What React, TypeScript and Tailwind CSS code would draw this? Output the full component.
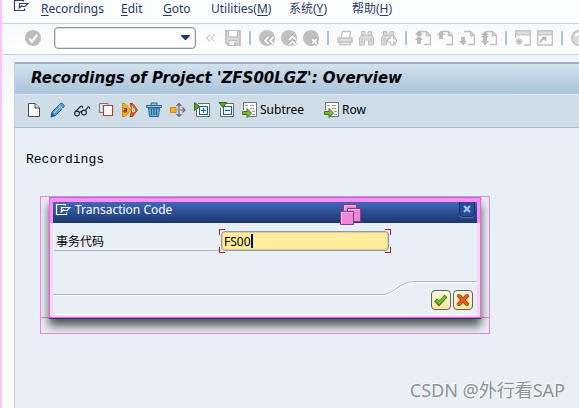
import type { ReactNode } from "react";

const GREY = "#c0c0c0";

function Icon({ children }: { children: ReactNode }) {
  return (
    <svg width="16" height="16" viewBox="0 0 16 16" fill="none" aria-hidden="true" className="block shrink-0">
      {children}
    </svg>
  );
}

function IconButton({ label, children }: { label: string; children: ReactNode }) {
  return (
    <button type="button" aria-label={label} title={label} className="h-4 w-4 shrink-0">
      <Icon>{children}</Icon>
    </button>
  );
}

function Separator() {
  return <span className="mx-2 h-3.5 w-0.5 shrink-0 bg-[#a9c4dd]" />;
}

function ExitMark({ color }: { color: string }) {
  return (
    <g stroke={color} strokeWidth="1.2">
      <path d="M10.5 3.5V2.5H1.5V12.5H11.5V10.5" />
      <path d="M6.5 9.5V5.5H15L12 8.5H8.5" />
      <path d="M5.5 10.5L9 7.5" />
    </g>
  );
}

function Page() {
  return <path d="M5 1.5H11.5L15.5 5.5V14.5H9M11.5 1.5V5.5H15.5" stroke={GREY} strokeWidth="1.5" />;
}

function Binoculars() {
  return (
    <>
      <path d="M2.5 1.5H6V5H9V1.5H12.5V5L14.5 8V15H9.5V10H5.5V15H0.5V8L2.5 5Z" fill="#dadada" stroke={GREY} />
      <path d="M2 5.5H6M9 5.5H13M3 8V13M12 8V13" stroke={GREY} />
    </>
  );
}

function TreeSheet() {
  return (
    <>
      <path d="M1.5 8V.5H14.5V14.5H6" fill="#fff" stroke="#707070" />
      <path d="M3 3.5H6M8 3.5H12M8 6.5H12M10 9.5H13M10 12.5H13" stroke="#9a9a9a" />
      <path d="M.5 9.5H5V6.5L9.5 11L5 15.5V12.5H.5Z" fill="#7dbb2c" stroke="#41761c" />
    </>
  );
}

function MenuBar() {
  const items = [
    { label: "Recordings", before: "", key: "R", after: "ecordings", width: "w-[80px]" },
    { label: "Edit", before: "", key: "E", after: "dit", width: "w-[42px]" },
    { label: "Goto", before: "", key: "G", after: "oto", width: "w-[48px]" },
    { label: "Utilities", before: "Utilities(", key: "M", after: ")", width: "w-[78px]" },
    { label: "系统", before: "系统(", key: "Y", after: ")", width: "w-[63px]" },
    { label: "帮助", before: "帮助(", key: "H", after: ")", width: "w-[50px]" },
  ];
  return (
    <nav className="flex h-6 items-start border-b border-[#cfd5de] bg-[#fcfdff] pl-[11px]">
      <button type="button" aria-label="System menu" className="-mt-0.5 mr-3">
        <Icon>
          <ExitMark color="#303d68" />
        </Icon>
      </button>
      {items.map((item) => (
        <button
          key={item.label}
          type="button"
          className={`${item.width} shrink-0 whitespace-nowrap text-left text-[12px] leading-[18px] text-[#283a66]`}
        >
          {item.before}
          <span className="underline underline-offset-2">{item.key}</span>
          {item.after}
        </button>
      ))}
    </nav>
  );
}

function StandardToolbar() {
  return (
    <div className="flex h-[31px] items-center overflow-hidden border-b border-[#c6cfda] bg-gradient-to-b from-[#f8f9fb] to-white pb-0.5 pl-[23px]">
      <IconButton label="Enter">
        <circle cx="8" cy="8" r="8" fill="#bdbdbd" />
        <path d="M4 8.5L7 11.5L12 5" stroke="#fff" strokeWidth="2.2" />
      </IconButton>
      <div className="relative ml-[13px] h-[22px] w-[142px] shrink-0">
        <select
          aria-label="Command"
          className="h-full w-full appearance-none rounded-sm border border-[#92979f] bg-white shadow-[inset_0_0_0_1px_#dcdfe3]"
        />
        <svg width="9" height="5" viewBox="0 0 9 5" aria-hidden="true" className="pointer-events-none absolute right-1.5 top-2">
          <path d="M0 0H9V1L5 5H4L0 1Z" fill="#26396b" />
        </svg>
      </div>
      <div className="ml-[7px] flex shrink-0 items-center gap-1.5">
        <IconButton label="Collapse">
          <path d="M7 4.5L3.5 8L7 11.5M11.5 4.5L8 8L11.5 11.5" stroke="#cfcfcf" strokeWidth="1.3" />
        </IconButton>
        <IconButton label="Save">
          <path d="M1 1H15V15H3L1 13Z" fill="#dcdcdc" stroke={GREY} strokeWidth="1.8" />
          <path d="M3.5 1V7H12.5V1M4 15V10.5H12V15" fill="#fff" stroke={GREY} strokeWidth="1.3" />
          <path d="M9 12H11V15H9Z" fill={GREY} />
        </IconButton>
      </div>
      <Separator />
      <div className="flex shrink-0 items-center gap-1.5">
        <IconButton label="Back">
          <circle cx="8" cy="8" r="8" fill={GREY} />
          <path d="M9.5 7L6 10.5L9.5 14M14.5 7L11 10.5L14.5 14" stroke="#aaa" strokeWidth="3.2" />
          <path d="M9.5 7L6 10.5L9.5 14M14.5 7L11 10.5L14.5 14" stroke="#fff" strokeWidth="1.8" />
        </IconButton>
        <IconButton label="Exit">
          <circle cx="8" cy="8" r="8" fill={GREY} />
          <path d="M8 10L11.5 6.5L15 10M8 15L11.5 11.5L15 15" stroke="#aaa" strokeWidth="3.2" />
          <path d="M8 10L11.5 6.5L15 10M8 15L11.5 11.5L15 15" stroke="#fff" strokeWidth="1.8" />
        </IconButton>
        <IconButton label="Cancel">
          <circle cx="8" cy="8" r="8" fill={GREY} />
          <path d="M8.5 8.5L14.5 14.5M14.5 8.5L8.5 14.5" stroke="#aaa" strokeWidth="4" />
          <path d="M9 9L14 14M14 9L9 14" stroke="#fff" strokeWidth="2.2" />
        </IconButton>
      </div>
      <Separator />
      <div className="flex shrink-0 items-center gap-1.5">
        <IconButton label="Print">
          <path d="M4 8L5.5 1.5H13.5L12.5 8" fill="#fff" stroke={GREY} strokeWidth="1.3" />
          <path d="M1 8H15V12H1Z" fill="#ddd" stroke={GREY} strokeWidth="1.5" />
          <path d="M3 12V14.5H13V12" stroke={GREY} strokeWidth="1.5" />
        </IconButton>
        <IconButton label="Find">
          <Binoculars />
        </IconButton>
        <IconButton label="Find next">
          <Binoculars />
          <path d="M9.5 6H12.5V9H15.5V12H12.5V15H9.5V12H6.5V9H9.5Z" fill="#fff" stroke={GREY} />
        </IconButton>
      </div>
      <Separator />
      <div className="flex shrink-0 items-center gap-1.5">
        <IconButton label="First page">
          <Page />
          <path d="M0 4.5L4 0L8 4.5H6V6H2V4.5ZM0 10L4 5.5L8 10H6V14H2V10Z" fill="#bbb" />
        </IconButton>
        <IconButton label="Previous page">
          <Page />
          <path d="M0 5L4 .5L8 5H6V9H2V5Z" fill="#bbb" />
        </IconButton>
        <IconButton label="Next page">
          <Page />
          <path d="M2 7H6V11H8L4 15.5L0 11H2Z" fill="#bbb" />
        </IconButton>
        <IconButton label="Last page">
          <Page />
          <path d="M0 5L4 1L8 5H6V6H8L4 10L0 6H2V5ZM2 8H6V11H8L4 15.5L0 11H2Z" fill="#bbb" />
        </IconButton>
      </div>
      <Separator />
      <div className="flex shrink-0 items-center gap-1.5">
        <IconButton label="New session">
          <path d="M.7 8V1H15.3V15H9" stroke={GREY} strokeWidth="1.3" />
          <path d="M1 1H15V5H1Z" fill="#dcdcdc" stroke={GREY} />
          <path d="M4 8V15M.5 11.5H7.5M1.5 9L6.5 14M6.5 9L1.5 14" stroke={GREY} strokeWidth="1.3" />
        </IconButton>
        <IconButton label="Create shortcut">
          <path d="M.7 1H15.3V15H.7Z" stroke={GREY} strokeWidth="1.3" />
          <path d="M1 1H15V5H1Z" fill="#dcdcdc" stroke={GREY} />
          <path d="M3.5 13C3.5 10 5 9 8 8.5M5 7.5H8.5V11" stroke="#b3b3b3" strokeWidth="1.5" />
        </IconButton>
      </div>
      <Separator />
      <IconButton label="Help">
        <circle cx="8" cy="8" r="7.3" fill="#d8d8d8" stroke={GREY} strokeWidth="1.4" />
        <path d="M5 6.5C5 2.5 11 3 11 6C11 8 8 8 8 10.5M8 12V13.5" stroke="#fff" strokeWidth="2" />
      </IconButton>
    </div>
  );
}

function ApplicationToolbar() {
  return (
    <div className="flex h-[33px] items-center gap-2 overflow-hidden border-b border-[#a9b7c9] bg-[#cfdde8] pb-0.5 pl-[11px]">
      <IconButton label="Create">
        <path d="M2.5 1.5H9L13.5 6V14.5H2.5Z" fill="#fff" stroke="#4d4d4d" />
        <path d="M9 1.5V6H13.5" fill="#ddd" stroke="#4d4d4d" />
      </IconButton>
      <IconButton label="Change">
        <path d="M1 15L2 10L10.5 1.5C12 .5 15 3 14 5L5.5 13.5Z" fill="#5e9ccb" stroke="#2a6595" />
        <path d="M4 11L11 4M9 3L13 7" stroke="#b7d9ef" />
        <path d="M1 15L2 11L5 14Z" fill="#2b5370" />
      </IconButton>
      <IconButton label="Display">
        <g stroke="#222" strokeWidth="1.1">
          <circle cx="3" cy="11.5" r="2.4" />
          <circle cx="10" cy="10.5" r="2.4" />
          <path d="M5.5 11Q6.5 9 7.6 10M1 10L6.5 4.5Q8.5 3 8.5 6M11.5 8.5L14 5Q16 4 15.5 7" />
        </g>
      </IconButton>
      <IconButton label="Copy">
        <path d="M5 10.5H1.5V1.5H10V4" fill="#dfe8ef" stroke="#777" />
        <path d="M5.5 3.5H14.5V13.5H5.5Z" fill="#fff" stroke="#b3422b" strokeWidth="1.2" />
      </IconButton>
      <IconButton label="Rename">
        <path d="M.5 1.5H3L9 8L3 14.5H.5Z" fill="#f8b11e" stroke="#d78200" />
        <path d="M8 1.5H10.5L15.5 8L10.5 14.5H8L10 8Z" fill="#df5c1c" stroke="#b93d12" />
        <path d="M2 6.5H4.5V10H2V8H4.5" stroke="#513600" />
        <path d="M10.5 4.5V9.5H12.5V7H10.5" stroke="#fff" />
      </IconButton>
      <IconButton label="Delete">
        <path d="M5 3V1H11V3M.5 3.5H15.5V5.5H.5Z" fill="#9cc8e0" stroke="#246a96" />
        <path d="M2.5 6H13.5L12.5 14.5H3.5Z" fill="#75add0" stroke="#246a96" />
        <path d="M5.5 7V13M8 7V13M10.5 7V13" stroke="#24678f" strokeWidth="1.2" />
      </IconButton>
      <IconButton label="Process">
        <path d="M7 8H15M12.5 5.5L15 8L12.5 10.5M9 7V1.5M6.5 4L9 1.5L11.5 4M9 9V14.5M6.5 12L9 14.5L11.5 12" stroke="#696969" strokeWidth="1.2" />
        <path d="M.5 5.5H6V10.5H.5Z" fill="#ffb32c" stroke="#dc8205" />
      </IconButton>
      <IconButton label="Expand subtree">
        <path d="M4 1.5H15.5V14.5H2.5V8" fill="#fff" stroke="#696969" />
        <path d="M5.5 4.5H13.5V12.5H5.5ZM7 8.5H12M9.5 6V11" stroke="#18658f" strokeWidth="1.2" />
        <path d="M.5 .5L6 4.5L.5 8.5Z" fill="#5c9f26" stroke="#31701b" />
      </IconButton>
      <IconButton label="Collapse subtree">
        <path d="M8 1.5H15.5V14.5H2.5V6" fill="#fff" stroke="#696969" />
        <path d="M5.5 4.5H13.5V12.5H5.5ZM7 8.5H12" stroke="#18658f" strokeWidth="1.2" />
        <path d="M1 .5H8.5L5 5.5Z" fill="#5c9f26" stroke="#31701b" />
      </IconButton>
      <button type="button" className="mr-3 flex shrink-0 items-center gap-0.5 text-[12px] leading-4">
        <Icon>
          <TreeSheet />
        </Icon>
        Subtree
      </button>
      <button type="button" className="flex shrink-0 items-center gap-0.5 text-[12px] leading-4">
        <Icon>
          <TreeSheet />
        </Icon>
        Row
      </button>
    </div>
  );
}

function TransactionDialog() {
  return (
    <div className="relative ml-[25px] w-[450px] overflow-hidden border border-[#f57fd9] px-2 pb-[15px]">
      <span className="absolute inset-x-0 bottom-[15px] h-px bg-[#f57fd9]" />
      <div
        role="dialog"
        aria-labelledby="dialog-title"
        className="relative border border-[#e866d0] border-b-[#f45fd5] border-t-[#8a82b8] bg-[#e8eff6] shadow-[0_1px_0_#24366e,0_8px_9px_0_rgba(0,0,0,0.65)]"
      >
        <div className="border-x-[3px] border-t-4 border-[#fb8df8]">
          <div className="flex h-[21px] items-start bg-gradient-to-b from-[#4267b9] to-[#1a376f] px-0.5 text-white">
            <Icon>
              <ExitMark color="#fff" />
            </Icon>
            <h2 id="dialog-title" className="ml-1 flex-1 text-[12px] leading-4">
              Transaction Code
            </h2>
            <button
              type="button"
              aria-label="Close"
              className="flex h-[15px] w-4 items-center justify-center rounded-b-sm border border-t-0 border-[#14316c] bg-[#284b91] shadow-[0_1px_0_#5277bd]"
            >
              <svg width="8" height="8" viewBox="0 0 8 8" aria-hidden="true">
                <path d="M1 1L7 7M7 1L1 7" stroke="#a9c7fa" strokeWidth="2" />
              </svg>
            </button>
          </div>
        </div>

        <form className="border-x-[3px] border-b-2 border-[#fbd3f8]">
          <div className="flex h-8 items-start border-l border-white pt-2">
            <label
              htmlFor="tcode"
              className="h-5 w-[167px] shrink-0 border-b border-[#b0b5ba] pl-0.5 text-[12px] leading-[22px] text-black"
            >
              事务代码
            </label>
            <div className="relative">
              <input
                id="tcode"
                defaultValue="FS00"
                className="block h-5 w-[168px] rounded-sm border border-[#96999d] bg-[#ffec9c] pl-0.5 text-[12px] leading-4 text-black shadow-[inset_0_0_0_1px_#d8cfa0] outline-none"
              />
              <span className="absolute left-[30px] top-[3px] h-3.5 w-0.5 bg-[#00105e]" />
              <span className="absolute -left-0.5 -top-0.5 h-1.5 w-1.5 border-l border-t border-[#d80f16]" />
              <span className="absolute -right-0.5 -top-0.5 h-1.5 w-1.5 border-r border-t border-[#d80f16]" />
              <span className="absolute -bottom-0.5 -left-0.5 h-1.5 w-1.5 border-b border-l border-[#d80f16]" />
              <span className="absolute -bottom-0.5 -right-0.5 h-1.5 w-1.5 border-b border-r border-[#d80f16]" />
            </div>
          </div>

          <div className="flex pt-[26px]">
            <div className="h-3.5 flex-1 border-b border-[#adb9c6] shadow-[0_1px_0_#fff]" />
            <svg width="32" height="15" viewBox="0 0 32 15" fill="none" aria-hidden="true" className="shrink-0">
              <path d="M0 14.5C12 14.5 18 1.5 32 1.5" stroke="#fff" />
              <path d="M0 13.5C12 13.5 18 .5 32 .5" stroke="#adb9c6" />
            </svg>
            <div className="h-3.5 w-[63px] border-t border-[#adb9c6] shadow-[inset_0_1px_0_#fff]" />
          </div>
          <div className="-mt-1.5 flex h-[25px] justify-end gap-0.5 border-b border-white pr-1">
            <button
              type="button"
              aria-label="Continue"
              className="flex h-5 w-5 items-center justify-center rounded-sm border border-[#62635d] bg-gradient-to-b from-[#fffbe2] to-[#fbe79b]"
            >
              <Icon>
                <path d="M2.5 8L6 11.5L13 4" stroke="#41761c" strokeWidth="4" />
                <path d="M3.2 8.5L6 11L12.4 4.5" stroke="#7bc52f" strokeWidth="2.2" />
              </Icon>
            </button>
            <button
              type="button"
              aria-label="Cancel"
              className="flex h-5 w-5 items-center justify-center rounded-sm border border-[#62635d] bg-gradient-to-b from-[#fffbe2] to-[#fbe79b]"
            >
              <Icon>
                <path d="M4 4L12 12M12 4L4 12" stroke="#a33e0c" strokeWidth="4" strokeLinecap="round" />
                <path d="M4 4L12 12M12 4L4 12" stroke="#ed6320" strokeWidth="2.2" strokeLinecap="round" />
              </Icon>
            </button>
          </div>
        </form>

        <svg width="21" height="21" viewBox="0 0 21 21" aria-hidden="true" className="absolute left-[290px] top-1.5">
          <g fill="#ef87d6" stroke="#873d83">
            <path d="M3.5 .5H16.5V13.5H3.5Z" />
            <path d="M7.5 4.5H20.5V17.5H7.5Z" />
            <path d="M.5 7.5H13.5V20.5H.5Z" />
          </g>
          <path d="M4.5 6V1.5H15.5M8.5 7V5.5H19.5M1.5 19.5V8.5H12.5" fill="none" stroke="#f8b5ea" />
        </svg>
      </div>
    </div>
  );
}

export default function App() {
  return (
    <div className="flex min-h-screen flex-col overflow-hidden border-l-2 border-[#ffc3ff] bg-white font-['Noto_Sans','Noto_Sans_CJK_SC',sans-serif]">
      <MenuBar />
      <StandardToolbar />
      <main className="flex flex-1 flex-col bg-gradient-to-b from-[#f1f4f9] to-white to-20% pl-3 pt-[7px]">
        <div className="flex flex-1 flex-col border-l border-[#c9d1da] bg-[#e8eff6]">
          <h1 className="h-[33px] whitespace-nowrap border-b border-t-2 border-b-[#dfebf4] border-t-[#9fb1c6] bg-gradient-to-b from-[#d2e1ed] to-[#aac2da] pl-4 font-['DejaVu_Sans',sans-serif] text-[15px] font-bold italic leading-7 text-black">
            Recordings of Project 'ZFS00LGZ': Overview
          </h1>
          <ApplicationToolbar />
          <p className="mb-7 mt-6 pl-[11px] font-['Liberation_Mono',monospace] text-[13px] leading-4 text-black">
            Recordings
          </p>
          <TransactionDialog />
          <p className="mt-auto pb-1.5 pr-3.5 text-right text-[18px] leading-6 text-[#8e9196] [text-shadow:-1px_-1px_0_#fff]">
            CSDN @外行看SAP
          </p>
        </div>
      </main>
    </div>
  );
}
